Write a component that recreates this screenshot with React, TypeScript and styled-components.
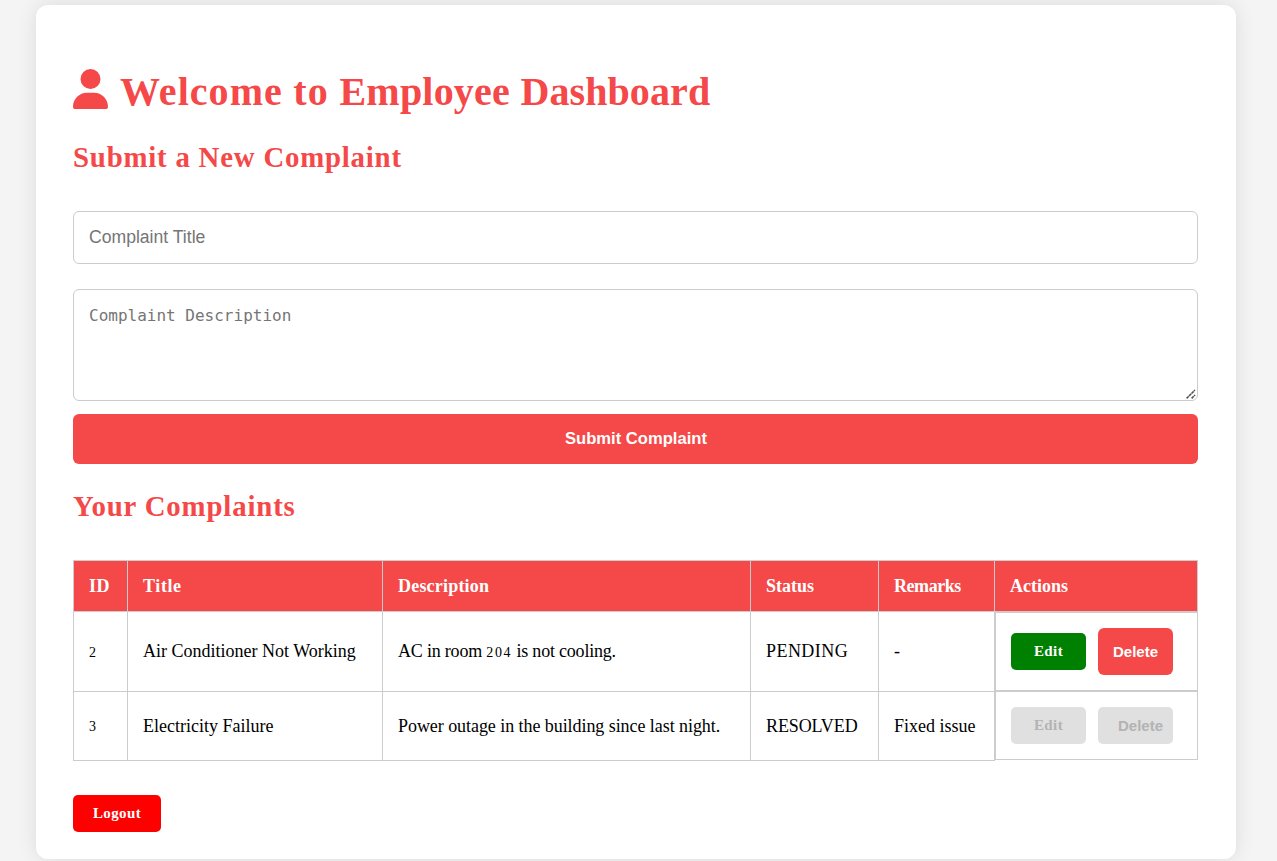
import React from "react";
import styled, { createGlobalStyle, css } from "styled-components";
import { FaUser } from "react-icons/fa6";

const serif = `"Baskerville Old Face", "Liberation Serif", serif`;
const sans = `"Liberation Sans", Arial, sans-serif`;
const accent = "#f54848";

const GlobalStyle = createGlobalStyle`
  * { box-sizing: border-box; }
  html { overflow: hidden; }
  body {
    margin: 0;
    background: #f4f4f4;
    color: #000;
    font-family: ${serif};
  }
`;

const Page = styled.div`
  display: flex;
  align-items: flex-start;
  height: 861px;
  padding: 5px 41px 0 36px;
  overflow: hidden;
`;

const Card = styled.main`
  width: 1200px;
  height: 854px;
  flex: none;
  padding: 62px 38px 0 37px;
  background: #fff;
  border-radius: 12px;
  box-shadow: 0 0 20px rgba(0, 0, 0, 0.1);
`;

const PageTitle = styled.h1`
  display: flex;
  gap: 12px;
  height: 48px;
  margin: 0 0 24px;
  color: ${accent};
  font-size: 40px;
  line-height: 50px;
  letter-spacing: 0.45px;
  white-space: nowrap;
`;

const Word = styled.span<{ $track: number }>`
  letter-spacing: ${(p) => p.$track}px;
`;

const UserIcon = styled(FaUser)`
  width: 35px;
  height: 40px;
  margin-top: 2px;
`;

const SectionTitle = styled.h2<{ $track: number }>`
  height: 34px;
  margin: 0;
  color: ${accent};
  font-size: 28.8px;
  line-height: 36px;
  letter-spacing: ${(p) => p.$track}px;
`;

const ComplaintForm = styled.form`
  display: flex;
  flex-direction: column;
  margin: 38px 0 24px;
`;

const field = css`
  width: 100%;
  padding: 15px;
  border: 1px solid #ccc;
  border-radius: 6px;
  background: #fff;
  outline: none;
  &::placeholder {
    color: #757575;
  }
`;

const TitleInput = styled.input`
  ${field}
  height: 53px;
  font: 17.6px ${sans};
`;

const DescriptionField = styled.div`
  position: relative;
  height: 112px;
  margin: 25px 0 13px;
`;

const DescriptionInput = styled.textarea`
  ${field}
  display: block;
  height: 112px;
  padding-top: 16px;
  font: 16px/20px "DejaVu Sans Mono", monospace;
  resize: none;
`;

const ResizeGrip = styled.svg`
  position: absolute;
  right: 2px;
  bottom: 2px;
  width: 10px;
  height: 10px;
  pointer-events: none;
`;

const SubmitButton = styled.button`
  height: 50px;
  padding: 0 0 0 1px;
  border: 0;
  border-radius: 6px;
  background: ${accent};
  color: #fff;
  font: bold 16.6px ${sans};
`;

const ComplaintTable = styled.table`
  width: 1125px;
  margin: 38px 0 34px;
  border-collapse: collapse;
  table-layout: fixed;
  font-size: 18px;
  line-height: 21px;
`;

const HeadCell = styled.th<{ $width: number; $track: number }>`
  width: ${(p) => p.$width}px;
  height: 51px;
  padding: 0 15px;
  border: 1px solid #ccc;
  background: ${accent};
  color: #fff;
  letter-spacing: ${(p) => p.$track}px;
  text-align: left;
  white-space: nowrap;
`;

const Cell = styled.td<{ $track?: number }>`
  padding: 0 15px;
  border: 1px solid #ccc;
  letter-spacing: ${(p) => p.$track ?? 0}px;
  white-space: nowrap;
`;

const Row = styled.tr<{ $height: number }>`
  height: ${(p) => p.$height}px;
`;

const ActionsCell = styled.td`
  display: flex;
  align-items: center;
  gap: 12px;
  padding: 15px;
  border: 1px solid #ccc;
  ${Row} + ${Row} > & {
    margin-top: -1px;
  }
`;

const Figures = styled.span`
  font-size: 14px;
  letter-spacing: 1.6px;
`;

const SerifButton = styled.button<{ $width: number; $color: string }>`
  width: ${(p) => p.$width}px;
  height: 37px;
  padding: 0;
  border: 0;
  border-radius: 5px;
  background: ${(p) => p.$color};
  color: #fff;
  font: bold 15px ${serif};
  letter-spacing: 0.4px;
  &:disabled {
    background: #e0e0e0;
    color: #b3b3b3;
  }
`;

const DeleteButton = styled.button`
  width: 75px;
  height: 47px;
  padding: 0 15px;
  border: 0;
  border-radius: 6px;
  background: ${accent};
  color: #fff;
  font: bold 15px ${sans};
  &:disabled {
    height: 37px;
    padding: 0 10px 0 20px;
    border-radius: 5px;
    background: #e0e0e0;
    color: #b3b3b3;
  }
`;

const columns = [
  { name: "ID", width: 54, track: 0.5 },
  { name: "Title", width: 255, track: 0.6 },
  { name: "Description", width: 368, track: 0.2 },
  { name: "Status", width: 128, track: 0 },
  { name: "Remarks", width: 116, track: -0.45 },
  { name: "Actions", width: 203, track: 0 },
];

const complaints = [
  {
    id: 2,
    title: "Air Conditioner Not Working",
    description: (
      <>
        AC in room <Figures>204</Figures> is not cooling.
      </>
    ),
    descriptionTrack: -0.2,
    status: "PENDING",
    statusTrack: 0.45,
    remarks: "-",
    closed: false,
    height: 80,
  },
  {
    id: 3,
    title: "Electricity Failure",
    description: "Power outage in the building since last night.",
    descriptionTrack: -0.06,
    status: "RESOLVED",
    statusTrack: -0.1,
    remarks: "Fixed issue",
    closed: true,
    height: 69,
  },
];

export default function App() {
  return (
    <Page>
      <GlobalStyle />
      <Card>
        <PageTitle>
          <UserIcon />
          <span>
            <Word $track={1.05}>Welcome</Word> <Word $track={1.2}>to</Word>{" "}
            <Word $track={0.2}>Employee</Word>{" "}
            <Word $track={0.1}>Dashboard</Word>
          </span>
        </PageTitle>
        <SectionTitle $track={0.8}>Submit a New Complaint</SectionTitle>
        <ComplaintForm onSubmit={(e) => e.preventDefault()}>
          <TitleInput placeholder="Complaint Title" />
          <DescriptionField>
            <DescriptionInput placeholder="Complaint Description" />
            <ResizeGrip viewBox="0 0 10 10" stroke="#555" strokeWidth="1.6">
              <path d="M0.6 9.4 9 1M5.6 9.4 9 6" strokeDasharray="3 0.5" />
            </ResizeGrip>
          </DescriptionField>
          <SubmitButton>Submit Complaint</SubmitButton>
        </ComplaintForm>
        <SectionTitle $track={0.85}>Your Complaints</SectionTitle>
        <ComplaintTable>
          <thead>
            <tr>
              {columns.map((c) => (
                <HeadCell key={c.name} $width={c.width} $track={c.track}>
                  {c.name}
                </HeadCell>
              ))}
            </tr>
          </thead>
          <tbody>
            {complaints.map((c) => (
              <Row key={c.id} $height={c.height}>
                <Cell>
                  <Figures>{c.id}</Figures>
                </Cell>
                <Cell>{c.title}</Cell>
                <Cell $track={c.descriptionTrack}>{c.description}</Cell>
                <Cell $track={c.statusTrack}>{c.status}</Cell>
                <Cell>{c.remarks}</Cell>
                <ActionsCell>
                  <SerifButton $width={75} $color="#008000" disabled={c.closed}>
                    Edit
                  </SerifButton>
                  <DeleteButton disabled={c.closed}>Delete</DeleteButton>
                </ActionsCell>
              </Row>
            ))}
          </tbody>
        </ComplaintTable>
        <SerifButton $width={88} $color="#ff0000">
          Logout
        </SerifButton>
      </Card>
    </Page>
  );
}
